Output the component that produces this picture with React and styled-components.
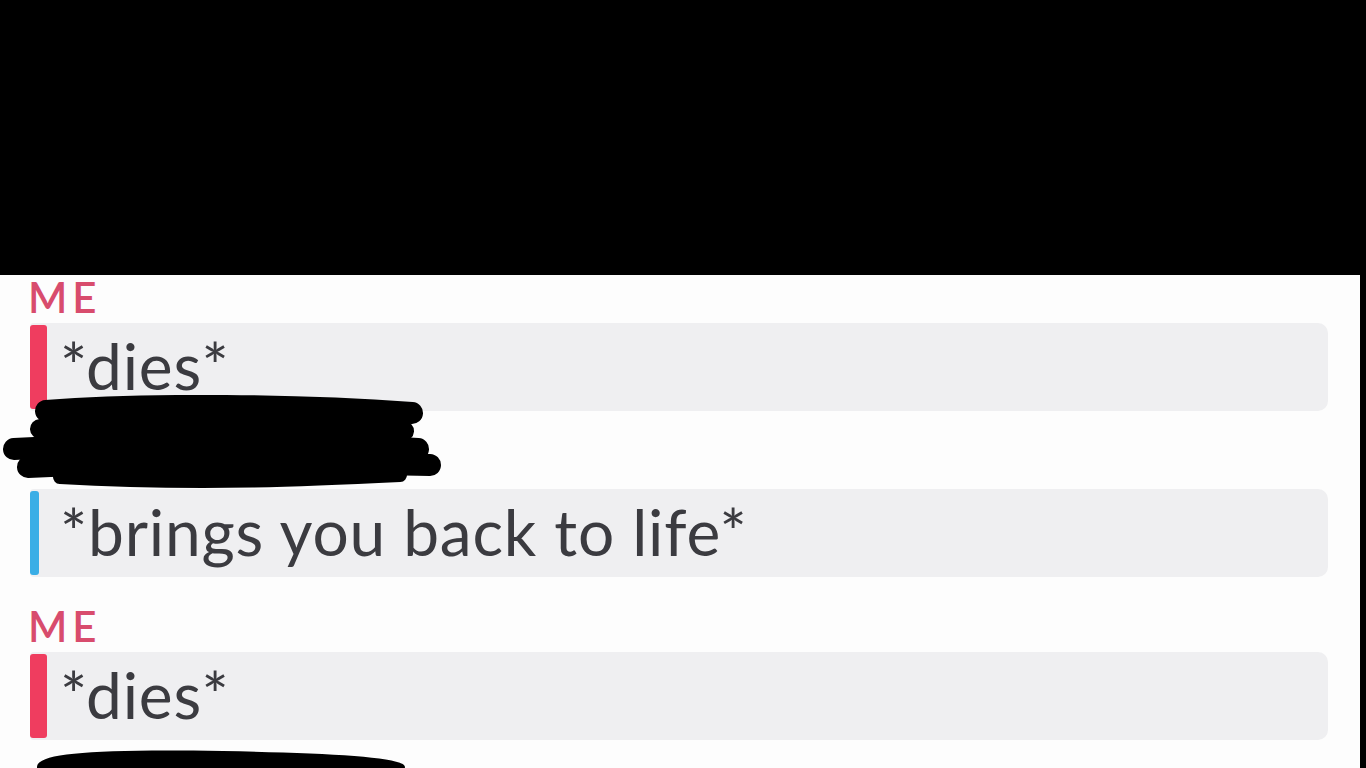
import React from "react";
import styled, { createGlobalStyle } from "styled-components";

const Global = createGlobalStyle`
  html, body { margin: 0; padding: 0; background: #000; }
  body { font-family: Lato, "Open Sans", sans-serif; overflow: hidden; }
`;

const Screen = styled.div`
  width: 1366px;
  height: 768px;
  display: flex;
  flex-direction: column;
  background: #000;
  overflow: hidden;
`;

const TopBlack = styled.div`
  height: 275px;
  flex: none;
  background: #000;
`;

const Chat = styled.div`
  flex: 1;
  margin-right: 6px;
  background: #fdfdfd;
  padding-left: 28px;
  padding-right: 32px;
`;

const Group = styled.div`
  margin-top: ${(p) => p.$gap || 0}px;
  position: relative;
`;

const Label = styled.div`
  height: 48px;
  font-size: 42px;
  line-height: 44px;
  font-weight: 600;
  letter-spacing: 5px;
  color: #d84c6d;
  position: relative;
`;

const Message = styled.div`
  display: flex;
  align-items: stretch;
  height: 88px;
  margin-left: 2px;
  background: #efeff1;
  border-radius: 4px 10px 10px 4px;
`;

const Bar = styled.div`
  flex: none;
  width: ${(p) => p.$w}px;
  background: ${(p) => p.$color};
  border-radius: 3px;
  margin: 2px 0;
`;

const Text = styled.div`
  padding-left: ${(p) => p.$pad}px;
  font-size: 64px;
  letter-spacing: 0.8px;
  line-height: 86px;
  color: #3b3b40;
  white-space: nowrap;
`;

const Scribble = styled.svg`
  position: absolute;
  left: ${(p) => p.$x}px;
  top: ${(p) => p.$y}px;
  pointer-events: none;
`;

const RED = "#ef3d5f";
const BLUE = "#3aaee6";

function Redaction1() {
  return (
    <Scribble $x={-28} $y={-46} width="460" height="100" viewBox="0 0 460 100">
      <path d="M48 14 C150 6 300 8 410 16 L404 74 C300 82 160 84 50 80 Z" fill="#000" />
      <g fill="none" stroke="#000" strokeLinecap="round" strokeLinejoin="round">
        <path d="M46 16 C150 8 300 10 412 18" strokeWidth="22" />
        <path d="M40 34 C180 28 320 30 404 36" strokeWidth="20" />
        <path d="M14 54 C150 46 300 46 418 54" strokeWidth="22" />
        <path d="M28 72 C160 66 310 68 430 70" strokeWidth="22" />
        <path d="M60 82 C200 90 320 84 400 80" strokeWidth="14" />
      </g>
    </Scribble>
  );
}

function Redaction2() {
  return (
    <Scribble $x={5} $y={141} width="380" height="40" viewBox="0 0 380 40">
      <path d="M4 22 C4 8 60 4 190 6 C300 8 372 12 372 22 C372 34 300 38 190 38 C60 38 4 38 4 22 Z" fill="#000" />
    </Scribble>
  );
}

export default function App() {
  return (
    <>
      <Global />
      <Screen>
        <TopBlack />
        <Chat>
          <Group>
            <Label>ME</Label>
            <Message>
              <Bar $w={17} $color={RED} />
              <Text $pad={13}>*dies*</Text>
            </Message>
          </Group>
          <Group $gap={30}>
            <Label>
              <Redaction1 />
            </Label>
            <Message>
              <Bar $w={9} $color={BLUE} />
              <Text $pad={21}>*brings you back to life*</Text>
            </Message>
          </Group>
          <Group $gap={27}>
            <Label>ME</Label>
            <Message>
              <Bar $w={17} $color={RED} />
              <Text $pad={13}>*dies*</Text>
            </Message>
            <Redaction2 />
          </Group>
        </Chat>
      </Screen>
    </>
  );
}
